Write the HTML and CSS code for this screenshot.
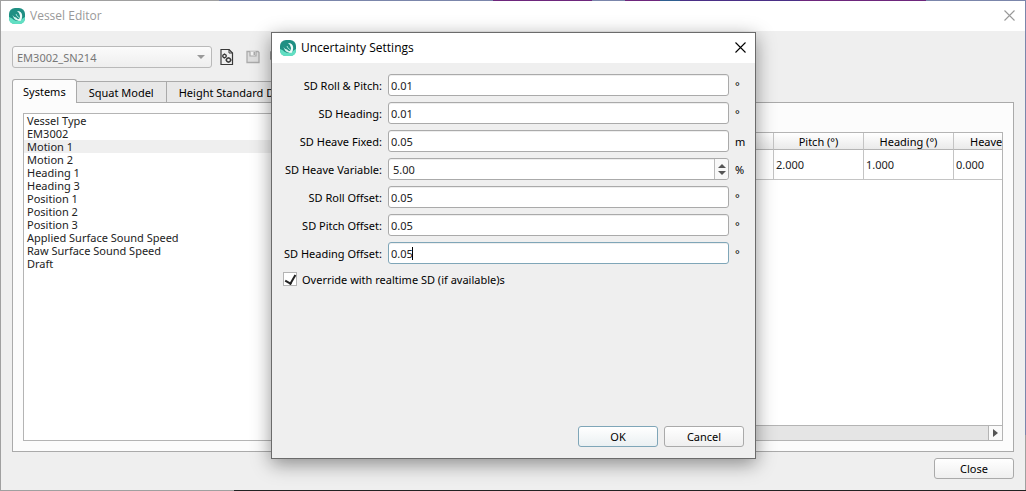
FILE: index.html
```
<!DOCTYPE html>
<html lang="en">
<head>
<meta charset="utf-8">
<title>Vessel Editor</title>
<link rel="stylesheet" href="styles.css">
</head>
<body>
<svg class="defs" aria-hidden="true">
  <symbol id="logo" viewBox="0 0 16 16">
    <rect width="16" height="16" rx="6" fill="#1f8f83"/>
    <path d="M0 9Q3 10 5 12Q9 14 12 12Q14 10 16 9V10Q16 16 10 16H6Q0 16 0 10Z" fill="#62dfc3"/>
    <path d="M8 3Q13 3 13.200 8Q13.200 11 11.500 13Q9 13 7.500 11.500Q11 11.500 11 8Q11 5 8 3Z" fill="#eefbf8"/>
    <path d="M3.500 7Q4.500 9 7 9.500L10.500 12.500Q5 13 3.500 7Z" fill="#d9f6ef"/>
    <path d="M7 6Q7.500 8.500 10.500 10" fill="none" stroke="#a5e3d8" stroke-width="1"/>
  </symbol>
  <symbol id="cross" viewBox="0 0 11 11"><path d="M.5 .5L10.500 10.500M10.500 .5L.5 10.500" fill="none" stroke="currentColor" stroke-width="1.100"/></symbol>
</svg>
<main class="window">
  <header class="titlebar">
    <svg class="logo"><use href="#logo"/></svg>
    <h1 class="title">Vessel Editor</h1>
    <button class="close-x" aria-label="Close window"><svg><use href="#cross"/></svg></button>
  </header>
  <div class="body">
    <div class="toolbar">
      <div class="combo">
        <select class="combo-select" aria-label="Vessel" disabled><option>EM3002_SN214</option></select>
        <svg class="combo-arrow" viewBox="0 0 8 4"><path d="M0 0H8L4 4Z" fill="#9a9a9a"/></svg>
      </div>
      <button class="tool" aria-label="Vessel settings">
        <svg viewBox="0 0 14 16" fill="none" stroke="#383838"><path d="M1 .5H9L12.500 4V15.500H1Z" stroke-width="1.200"/><path d="M9 .5V4H12.500"/><circle cx="4.500" cy="7" r="1.700" stroke-width="1.300"/><circle cx="8.500" cy="11" r="2" stroke-width="1.300"/><path d="M4.500 4.500V5M2 7H2.500M6.500 7H7M4.500 9V9.500M8.500 8V8.500M5.500 11H6M11 11H11.500M8.500 13.500V14" stroke-width="1.300"/></svg>
      </button>
      <button class="tool" aria-label="Save" disabled>
        <svg viewBox="0 0 14 16"><path d="M1 2.500H12L13 3.500V13.500H1Z" fill="#dedede" stroke="#ababab" stroke-width="1.300"/><path d="M4 2.500V7H10V2.500" fill="#f2f2f2" stroke="#ababab" stroke-width="1.200"/><path d="M7.500 3H9V6H7.500Z" fill="#ababab"/></svg>
      </button>
      <button class="tool tool-wide" aria-label="Save as" disabled>
        <svg viewBox="0 0 18 16"><path d="M.5 2.500H14V10.500H.5Z" fill="#dedede" stroke="#9a9a9a"/></svg>
      </button>
    </div>
    <div class="tabs" role="tablist">
      <button class="tab tab-active" role="tab" aria-selected="true">Systems</button>
      <button class="tab" role="tab" aria-selected="false">Squat Model</button>
      <button class="tab" role="tab" aria-selected="false">Height Standard D</button>
    </div>
    <section class="pane">
      <ul class="list">
        <li>Vessel Type</li>
        <li>EM3002</li>
        <li class="selected">Motion 1</li>
        <li>Motion 2</li>
        <li>Heading 1</li>
        <li>Heading 3</li>
        <li>Position 1</li>
        <li>Position 2</li>
        <li>Position 3</li>
        <li>Applied Surface Sound Speed</li>
        <li>Raw Surface Sound Speed</li>
        <li>Draft</li>
      </ul>
      <div class="grid-view">
        <div class="grid-scroll">
          <table class="grid">
            <thead><tr><th></th><th></th><th></th><th>Pitch (°)</th><th>Heading (°)</th><th class="last">Heave</th></tr></thead>
            <tbody><tr><td></td><td></td><td></td><td>2.000</td><td>1.000</td><td>0.000</td></tr></tbody>
          </table>
        </div>
        <div class="scrollbar">
          <button class="scroll-step" aria-label="Scroll right"><svg viewBox="0 0 5 8"><path d="M0 0L5 4L0 8Z" fill="#555"/></svg></button>
        </div>
      </div>
    </section>
    <footer class="footer"><button class="button">Close</button></footer>
  </div>
</main>

<section class="dialog" role="dialog" aria-labelledby="dialog-title">
  <header class="titlebar">
    <svg class="logo"><use href="#logo"/></svg>
    <h2 class="title" id="dialog-title">Uncertainty Settings</h2>
    <button class="close-x" aria-label="Close dialog"><svg><use href="#cross"/></svg></button>
  </header>
  <form class="form">
    <div class="fields">
      <label for="roll-pitch">SD Roll &amp; Pitch:</label><input class="field" id="roll-pitch" value="0.01"><span>°</span>
      <label for="heading">SD Heading:</label><input class="field" id="heading" value="0.01"><span>°</span>
      <label for="heave-fixed">SD Heave Fixed:</label><input class="field" id="heave-fixed" value="0.05"><span>m</span>
      <label for="heave-var">SD Heave Variable:</label>
      <div class="spin">
        <input class="spin-input" id="heave-var" value="5.00">
        <span class="spin-steps">
          <button type="button" aria-label="Increase"><svg viewBox="0 0 8 4"><path d="M0 4H8L4 0Z" fill="#555"/></svg></button>
          <button type="button" aria-label="Decrease"><svg viewBox="0 0 8 4"><path d="M0 0H8L4 4Z" fill="#555"/></svg></button>
        </span>
      </div><span>%</span>
      <label for="roll-off">SD Roll Offset:</label><input class="field" id="roll-off" value="0.05"><span>°</span>
      <label for="pitch-off">SD Pitch Offset:</label><input class="field" id="pitch-off" value="0.05"><span>°</span>
      <label for="heading-off">SD Heading Offset:</label>
      <div class="caret-field"><input class="field field-focus" id="heading-off" value="0.05"><i class="caret"></i></div><span>°</span>
    </div>
    <label class="check"><input type="checkbox" class="check-box" checked>Override with realtime SD (if available)s</label>
    <div class="actions">
      <button type="button" class="button button-default">OK</button>
      <button type="button" class="button">Cancel</button>
    </div>
  </form>
</section>
</body>
</html>
```
FILE: styles.css
```
* { box-sizing: border-box; }
html { height: 100%; }
body {
  margin: 0;
  min-height: 100%;
  display: flex;
  position: relative;
  padding: 1px;
  font: 11px/13px "Noto Sans", "Open Sans", sans-serif;
  color: #000;
  background:
    linear-gradient(90deg, #a0a0a0 219px, #7b86ab 219px, #7b86ab 493px, #6d267c 493px, #6d267c 592px, #7b86ab 592px, #7b86ab 625px, #6d267c 625px, #6d267c 660px, #2f5f90 660px, #2f5f90 680px, #4a2f86 680px, #4a2f86 800px, #6d267c 800px, #6d267c 926px, #7b86ab 926px) top / 100% 1px no-repeat,
    linear-gradient(90deg, #a0a0a0 234px, #222 234px) bottom / 100% 1px no-repeat,
    linear-gradient(#7b86ab 435px, #a0a0a0 435px) right / 1px 100% no-repeat,
    #a0a0a0;
}
button, input, select { font: inherit; color: inherit; margin: 0; padding: 0; }
button { border: 0; background: none; }
.defs { position: absolute; width: 0; height: 0; }

.window { flex: 1; min-width: 0; display: flex; flex-direction: column; background: #efefef; }
.titlebar { height: 30px; flex: none; display: flex; align-items: center; gap: 5px; padding: 0 10px 0 8px; background: #fff; }
.window .titlebar { color: #999; }
.logo { width: 16px; height: 16px; }
.title { flex: 1; margin: 0; font: 400 12px/16px "Open Sans", "Noto Sans", sans-serif; }
.dialog .titlebar { padding-right: 9px; }
.dialog .close-x { padding-bottom: 2px; }
.close-x svg { display: block; width: 11px; height: 11px; }
.window .close-x { padding-bottom: 2px; }

.body { flex: 1; display: flex; flex-direction: column; padding: 15px 11px 11px; }
.toolbar { display: flex; align-items: center; gap: 12px; height: 22px; }
.combo { position: relative; width: 200px; margin-right: -4px; }
.combo-select { appearance: none; width: 100%; height: 22px; padding: 0 4px; border: 1px solid #b9b9b9; border-radius: 3px; background: linear-gradient(#fbfbfb, #eee); color: #777; opacity: 1; display: block; }
.combo-arrow { position: absolute; right: 7px; top: 9px; width: 8px; height: 4px; }
.tool svg { display: block; width: 14px; height: 16px; }
.tool-wide { margin-left: -2px; }
.tool-wide svg { width: 18px; }

.tabs { display: flex; align-items: flex-end; margin-top: 11px; }
.tab { height: 21px; padding: 0 12px; border: 1px solid #aaa; border-left: 0; border-bottom: 0; background: #e8e8e8; }
.tab-active { height: 24px; padding: 0 10px; margin-bottom: -1px; position: relative; border-left: 1px solid #aaa; border-radius: 3px 3px 0 0; background: #fcfcfc; }
.pane { flex: 1; display: flex; border: 1px solid #aaa; background: #fcfcfc; padding: 10px; }
.list { flex: 1; margin: 0; padding: 0; list-style: none; border: 1px solid #b4b4b4; background: #fff; color: #222; }
.list li { padding: 0 3px; }
.list .selected { background: #efefef; }
.grid-view { flex: none; width: 500px; margin-top: 19px; display: flex; flex-direction: column; border: 1px solid #b4b4b4; background: #fff; }
.grid-scroll { flex: 1; overflow: hidden; }
.grid { table-layout: fixed; width: 540px; border-collapse: separate; border-spacing: 0; }
.grid th { height: 17px; padding: 0; border-right: 1px solid #c4c4c4; border-bottom: 1px solid #b4b4b4; background: linear-gradient(#fff, #eaeaea); font-weight: 400; }
.grid td { height: 30px; padding: 0 2px; border-right: 1px solid #c4c4c4; border-bottom: 1px solid #c4c4c4; color: #222; }
.grid th.last { text-align: left; padding-left: 16px; }
.scrollbar { display: flex; justify-content: flex-end; height: 15px; border-top: 1px solid #b4b4b4; background: #e5e5e5; }
.scroll-step { width: 14px; border-left: 1px solid #b4b4b4; background: #fafafa; display: grid; place-items: center; }
.scroll-step svg { width: 5px; height: 8px; }
.footer { display: flex; justify-content: flex-end; margin-top: 6px; }
.button { width: 80px; height: 21px; border: 1px solid #aaa; border-radius: 3px; background: linear-gradient(#fff, #efefef); }
.button-default { border-color: #7fa6b8; background: linear-gradient(#fff, #eaf0f2); }

.dialog { position: absolute; inset: 32px 270px 32px 271px; display: flex; flex-direction: column; border: 1px solid #6b6b6b; background: #efefef; box-shadow: 0 5px 18px rgba(0, 0, 0, .42); }
.form { flex: 1; display: flex; flex-direction: column; padding: 11px; }
.fields { display: grid; grid-template-columns: minmax(99px, auto) 1fr 9px; gap: 6px; align-items: center; }
.fields > label { text-align: right; }
.field, .spin { display: block; width: 100%; height: 22px; border: 1px solid #aaa; border-radius: 3px; background: #fff; color: #222; box-shadow: inset 0 1px #eee; }
.field { padding: 0 2px; }
.field-focus { border-color: #7fa6b8; }
.caret-field { position: relative; }
.caret { position: absolute; left: 24px; top: 5px; width: 1px; height: 13px; background: #000; }
.spin { display: flex; }
.spin-input { flex: 1; min-width: 0; border: 0; padding: 0 4px; background: none; }
.spin-steps { width: 14px; border-left: 1px solid #bbb; background: #f8f8f8; border-radius: 0 3px 3px 0; display: flex; flex-direction: column; justify-content: center; gap: 3px; }
.spin-steps button { display: grid; place-items: center; height: 4px; }
.spin-steps svg { width: 8px; height: 4px; }
.check { display: flex; align-items: center; gap: 5px; margin-top: 8px; align-self: flex-start; }
.check-box { appearance: none; width: 14px; height: 14px; border: 1px solid #b4b4b4; background: #fff; display: grid; place-items: center; }
.check-box:checked::after { content: ""; width: 5px; height: 9px; margin-bottom: 2px; border: solid #222; border-width: 0 2px 2px 0; transform: rotate(30deg); }
.actions { margin-top: auto; display: flex; justify-content: flex-end; gap: 6px; }
```
